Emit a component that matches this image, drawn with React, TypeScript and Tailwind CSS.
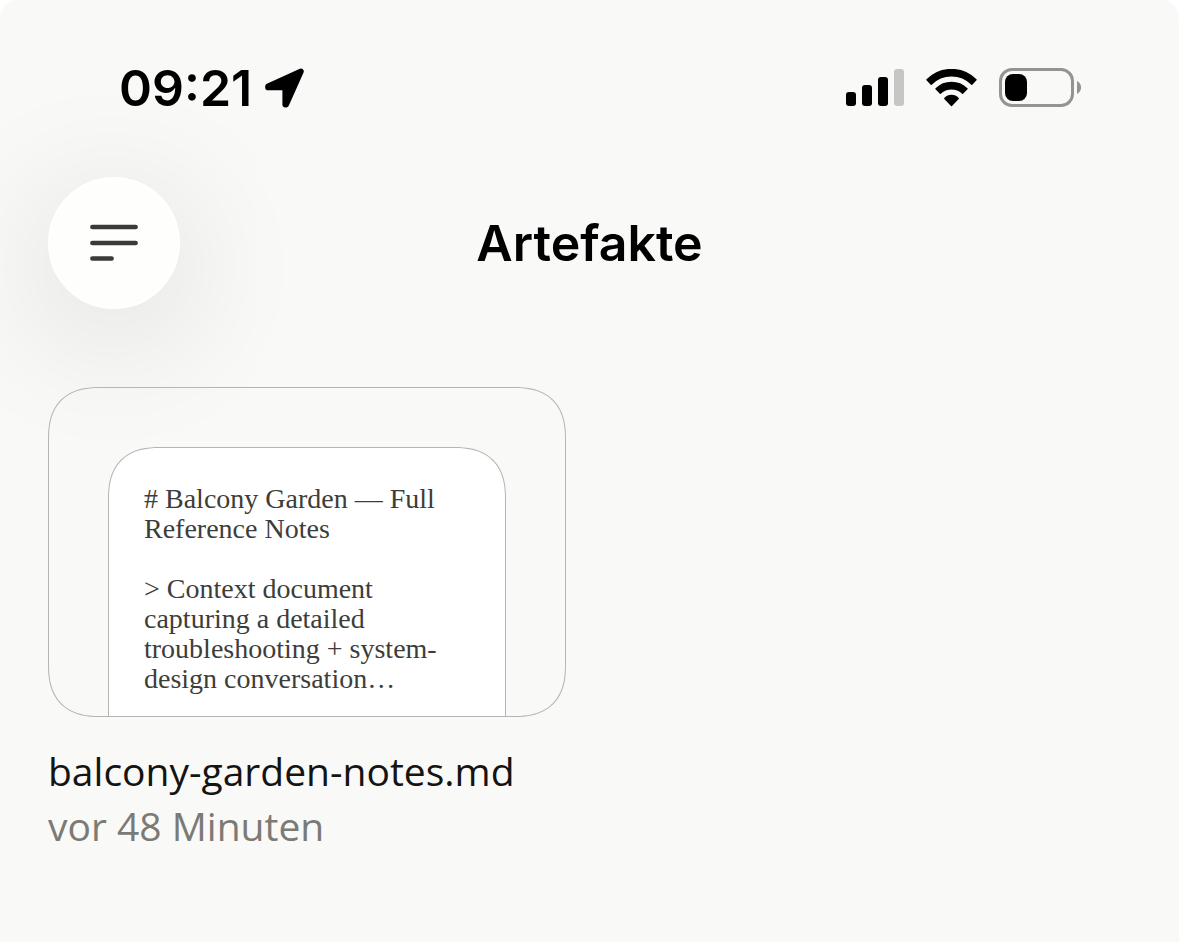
import React from 'react'

type Artifact = { id: string; heading: string; preview: string; name: string; age: string }

const artifacts: Artifact[] = [
  {
    id: 'balcony-garden',
    heading: '# Balcony Garden — Full Reference Notes',
    preview:
      '> Context document capturing a detailed troubleshooting + system-design conversation…',
    name: 'balcony-garden-notes.md',
    age: 'vor 48 Minuten'
  }
]

const LocationArrow: React.FC = () => (
  <svg width="40" height="40" viewBox="0 0 40 40" aria-hidden="true">
    <path
      d="M37 3.4 22.2 36.6H21.2V19.4H4V18.2Z"
      fill="#000"
      stroke="#000"
      strokeWidth="5.6"
      strokeLinejoin="round"
    />
  </svg>
)

const Signal: React.FC = () => (
  <svg width="58" height="38" viewBox="0 0 58 38" aria-hidden="true">
    <rect x="0" y="23" width="10" height="14" rx="3" />
    <rect x="16" y="16" width="10" height="21" rx="3" />
    <rect x="32" y="8" width="10" height="29" rx="3" />
    <rect x="48" y="0" width="10" height="37" rx="3" fill="#c6c6c4" />
  </svg>
)

const Wifi: React.FC = () => (
  <svg width="51" height="38" viewBox="0 0 51 38" aria-hidden="true">
    <g stroke="#000" strokeWidth="1.4" strokeLinejoin="round">
      <path d="M1 10.8a34.4 34.4 0 0 1 49 0L45.8 15.2a28.6 28.6 0 0 0-40.6 0Z" />
      <path d="M10 19.8a22.4 22.4 0 0 1 31 0L36.6 24.2a16.5 16.5 0 0 0-22.2 0Z" />
      <path d="M18.8 29.4a9.2 9.2 0 0 1 13.4 0L25.5 36.4Z" />
    </g>
  </svg>
)

const Battery: React.FC = () => (
  <svg width="83" height="40" viewBox="0 0 83 40" aria-hidden="true">
    <rect x="1.5" y="1.5" width="72" height="36" rx="11.5" fill="none" stroke="#949493" strokeWidth="3" />
    <rect x="6" y="6" width="22" height="27" rx="8" />
    <path d="M78 13c5.4 2.4 5.4 10.6 0 13Z" fill="#949493" />
  </svg>
)

const StatusBar: React.FC = () => (
  <div className="mb-0.5 flex h-[175px] items-center justify-between pr-[49px] pl-[71px]">
    <div className="flex items-center gap-3">
      <time className="text-[50px] leading-none font-semibold">09:21</time>
      <LocationArrow />
    </div>
    <div className="flex items-center gap-[22px]">
      <Signal />
      <Wifi />
      <Battery />
    </div>
  </div>
)

const Header: React.FC = () => (
  <header className="grid grid-cols-[132px_1fr_132px] items-center">
    <button
      type="button"
      aria-label="Menü"
      className="grid size-[132px] place-items-center rounded-full border-3 border-white bg-[#fefefc] shadow-[0_24px_140px_rgba(0,0,0,0.14)]"
    >
      <svg width="48" height="38" viewBox="0 0 48 38" aria-hidden="true">
        <path
          d="M2.4 3h43.2M2.4 19h43.2M2.4 34.5h19.2"
          fill="none"
          stroke="#3a3a38"
          strokeWidth="4.6"
          strokeLinecap="round"
        />
      </svg>
    </button>
    <h1 className="text-center text-[50px] leading-[52px] font-semibold">Artefakte</h1>
  </header>
)

const ArtifactCard: React.FC<{ item: Artifact }> = ({ item }) => (
  <a href={`#${item.id}`} className="block">
    <div className="overflow-hidden rounded-[52px] border border-[#b5b5b3] px-[59px] pt-[59px] [corner-shape:superellipse(1.3)]">
      <div className="rounded-t-[52px] border border-b-0 border-[#b5b5b3] bg-white px-[35px] pt-9 pb-[22px] font-['Liberation_Serif',serif] text-[28px] leading-[30px] text-[#3d3d3a] [corner-shape:superellipse(1.3)]">
        <p>{item.heading}</p>
        <p className="mt-[30px]">{item.preview}</p>
      </div>
    </div>
    <div className="mt-[26px] font-['Open_Sans',sans-serif] text-[39px] leading-[55px]">
      <h2 className="whitespace-nowrap text-[#141413]">{item.name}</h2>
      <p className="text-[#7b7a75]">{item.age}</p>
    </div>
  </a>
)

export default function App() {
  return (
    <div className="min-h-screen bg-white">
      <main className="min-h-screen rounded-t-[18px] bg-[#f9f9f7] px-12 font-['Inter',sans-serif] text-black">
        <StatusBar />
        <Header />
        <section className="mt-[78px] grid grid-cols-2 gap-12 pb-12">
          {artifacts.map((item) => (
            <ArtifactCard key={item.id} item={item} />
          ))}
        </section>
      </main>
    </div>
  )
}
